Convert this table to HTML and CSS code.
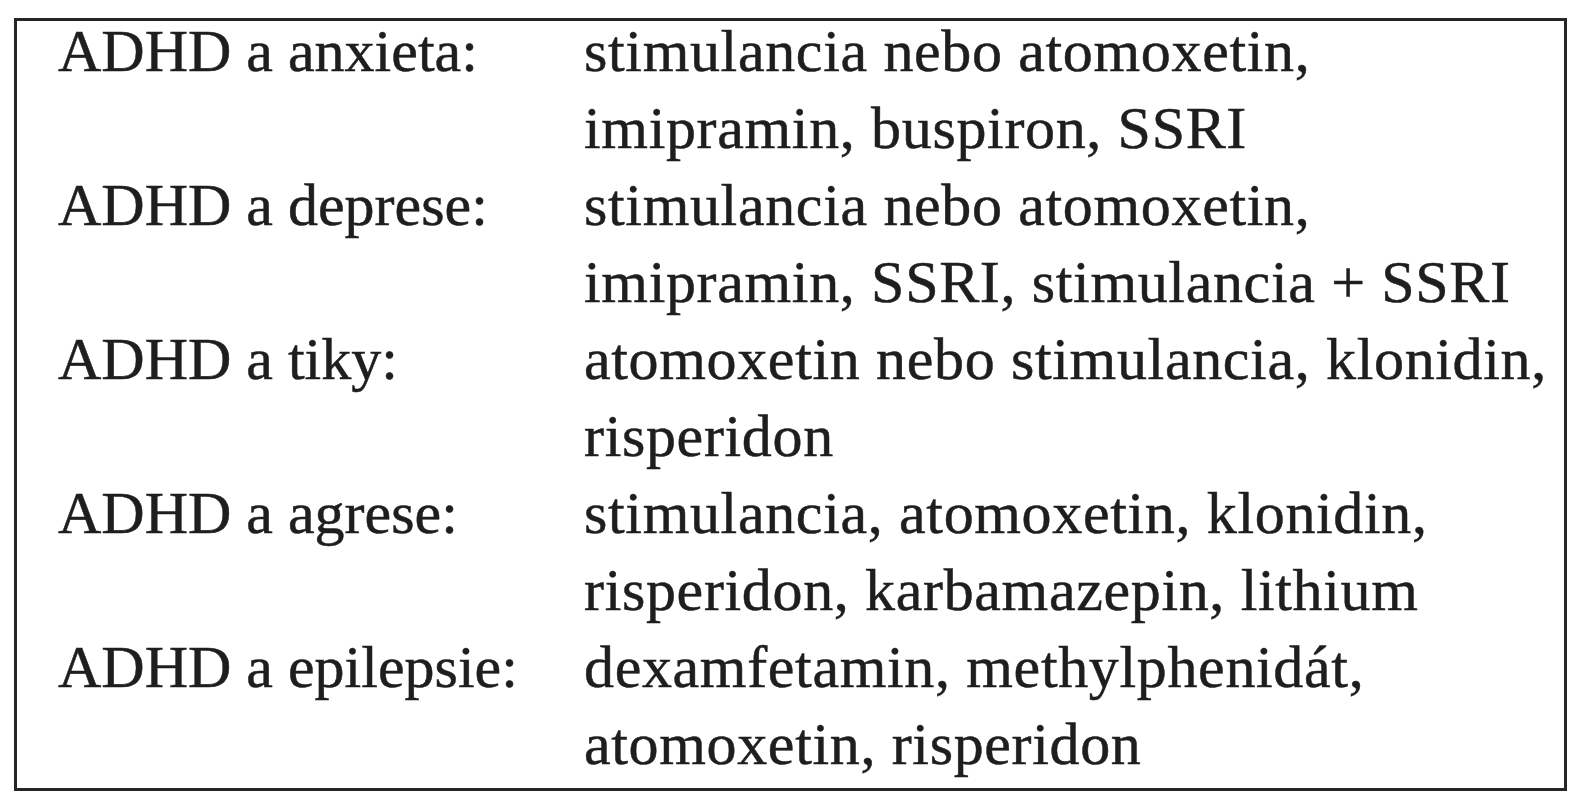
FILE: index.html
```html
<!DOCTYPE html>
<html lang="cs">
<head>
<meta charset="utf-8">
<title>ADHD komorbidity</title>
<link rel="stylesheet" href="styles.css">
</head>
<body>
<div class="box">
  <div class="table">
    <div class="term">ADHD a anxieta:</div>
    <div class="desc">stimulancia nebo atomoxetin,<br>imipramin, buspiron, SSRI</div>
    <div class="term">ADHD a deprese:</div>
    <div class="desc">stimulancia nebo atomoxetin,<br>imipramin, SSRI, stimulancia + SSRI</div>
    <div class="term">ADHD a tiky:</div>
    <div class="desc">atomoxetin nebo stimulancia, klonidin,<br>risperidon</div>
    <div class="term">ADHD a agrese:</div>
    <div class="desc">stimulancia, atomoxetin, klonidin,<br>risperidon, karbamazepin, lithium</div>
    <div class="term">ADHD a epilepsie:</div>
    <div class="desc">dexamfetamin, methylphenidát,<br>atomoxetin, risperidon</div>
  </div>
</div>
</body>
</html>
```

FILE: styles.css
```css
html, body {
  margin: 0;
  padding: 0;
  background: #ffffff;
}

body {
  font-family: "Liberation Serif", "Times New Roman", serif;
  color: #1e1e1e;
}

.box {
  box-sizing: border-box;
  margin: 18px 0 0 14px;
  width: 1553px;
  height: 773px;
  border: 3px solid #262626;
  padding: 0 0 0 41px;
  overflow: hidden;
}

.table {
  margin-top: -8px;
  display: grid;
  grid-template-columns: 526px 1fr;
  font-size: 60px;
  line-height: 77px;
  -webkit-text-stroke: 0.5px #1e1e1e;
}

.term,
.desc {
  white-space: nowrap;
}

.term {
  letter-spacing: 0;
}

.desc {
  letter-spacing: 0.65px;
}
```
